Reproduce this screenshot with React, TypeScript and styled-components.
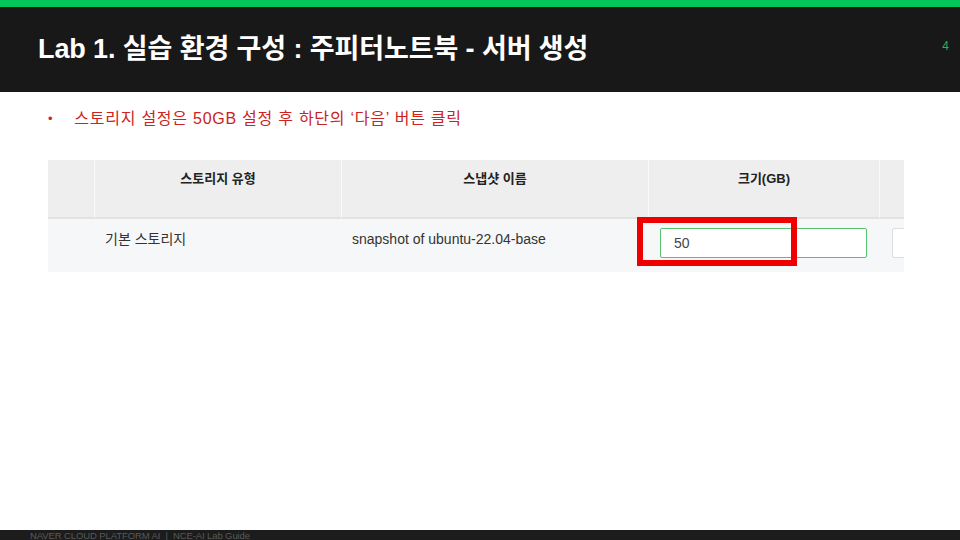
import React from "react";
import styled, { createGlobalStyle } from "styled-components";

const GlobalStyle = createGlobalStyle`
  html, body {
    margin: 0;
    padding: 0;
    background: #ffffff;
  }

  #root {
    width: 960px;
    height: 540px;
  }
`;

const Slide = styled.div`
  width: 960px;
  height: 540px;
  display: flex;
  flex-direction: column;
  overflow: hidden;
  background: #ffffff;
  font-family: "Liberation Sans", "Noto Sans CJK KR", sans-serif;
`;

const TitleBar = styled.header`
  height: 78px;
  border-top: 7px solid #03c75a;
  background: #181818;
  display: flex;
  align-items: center;
  justify-content: space-between;
  padding: 0 11px 7px 38px;
`;

const Title = styled.h1`
  margin: 0;
  color: #ffffff;
  font-size: 27px;
  font-weight: 700;
  letter-spacing: -0.1px;
`;

const PageNumber = styled.span`
  color: #1fb35a;
  font-size: 12px;
`;

const Content = styled.main`
  flex: 1;
  display: flex;
  flex-direction: column;
  padding: 16px 56px 0 48px;
`;

const BulletList = styled.ul`
  margin: 0;
  padding: 0;
  list-style: none;
`;

const BulletItem = styled.li`
  display: flex;
  align-items: center;
  gap: 21px;
  color: #cc2222;
  font-size: 16px;
  line-height: 22px;
  letter-spacing: 0.75px;

  &::before {
    content: "•";
    font-size: 13px;
  }
`;

const TableFrame = styled.div`
  margin-top: 30px;
  width: 856px;
  overflow: hidden;
`;

const Grid = styled.div`
  display: grid;
  grid-template-columns: 46px 247px 307px 231px 60px;
  width: 891px;
`;

const HeadCell = styled.div<{ $first?: boolean }>`
  height: 59px;
  box-sizing: border-box;
  background: #eeeeee;
  border-left: ${(p) => (p.$first ? "none" : "1px solid #fafafa")};
  border-bottom: 2px solid #e2e2e2;
  padding-top: 8px;
  text-align: center;
  color: #222222;
  font-size: 13px;
  font-weight: 700;
`;

const BodyCell = styled.div`
  position: relative;
  height: 53px;
  box-sizing: border-box;
  background: #f6f7f9;
  padding: 9px 11px 0;
  color: #333333;
  font-size: 14px;
  line-height: 22px;
`;

const SizeInput = styled.div<{ $active?: boolean }>`
  box-sizing: border-box;
  height: 30px;
  width: ${(p) => (p.$active ? "207px" : "100%")};
  margin-left: ${(p) => (p.$active ? "1px" : "2px")};
  padding-left: 13px;
  display: flex;
  align-items: center;
  background: #ffffff;
  border: 1px solid ${(p) => (p.$active ? "#57c26f" : "#dddddd")};
  border-radius: 2px;
  color: #444444;
  font-size: 14px;
`;

const Highlight = styled.span`
  position: absolute;
  left: -11px;
  top: -2px;
  width: 160px;
  height: 49px;
  box-sizing: border-box;
  border: 6px solid #ee0000;
  pointer-events: none;
`;

const Footer = styled.footer`
  height: 10px;
  background: #1c1c1c;
  display: flex;
  align-items: center;
  padding-left: 30px;
  color: #5a5a5a;
  font-size: 9.5px;
  letter-spacing: -0.1px;
`;

const headers = ["", "스토리지 유형", "스냅샷 이름", "크기(GB)", ""];

export default function App() {
  return (
    <>
      <GlobalStyle />
      <Slide>
        <TitleBar>
          <Title>Lab 1. 실습 환경 구성 : 주피터노트북 - 서버 생성</Title>
          <PageNumber>4</PageNumber>
        </TitleBar>

        <Content>
          <BulletList>
            <BulletItem>스토리지 설정은 50GB 설정 후 하단의 ‘다음’ 버튼 클릭</BulletItem>
          </BulletList>

          <TableFrame>
            <Grid>
              {headers.map((h, i) => (
                <HeadCell key={i} $first={i === 0}>
                  {h}
                </HeadCell>
              ))}
              <BodyCell />
              <BodyCell>기본 스토리지</BodyCell>
              <BodyCell>snapshot of ubuntu-22.04-base</BodyCell>
              <BodyCell>
                <SizeInput $active>50</SizeInput>
                <Highlight />
              </BodyCell>
              <BodyCell>
                <SizeInput />
              </BodyCell>
            </Grid>
          </TableFrame>
        </Content>

        <Footer>NAVER CLOUD PLATFORM AI&nbsp;&nbsp;|&nbsp;&nbsp;NCE-AI Lab Guide</Footer>
      </Slide>
    </>
  );
}
